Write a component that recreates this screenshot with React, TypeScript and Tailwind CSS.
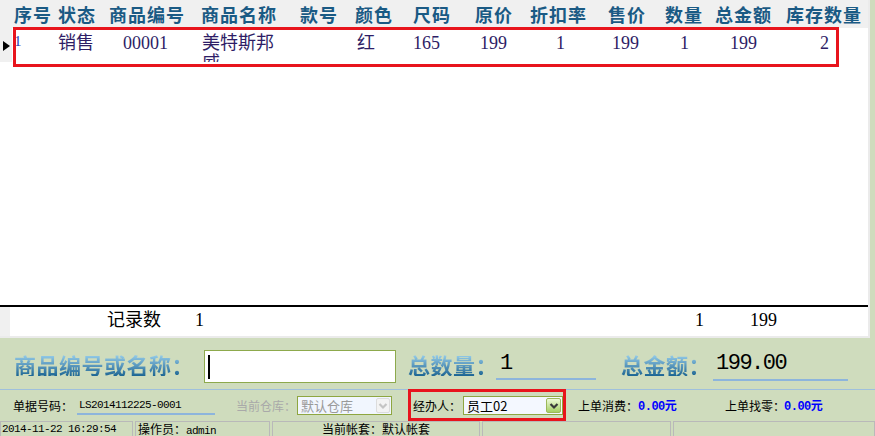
import React from 'react';

const columns = [
  { title: '序号', w: 'w-[44px]', pad: 'pl-[2px]', value: '1' },
  { title: '状态', w: 'w-[51px]', pad: 'pl-[2px]', value: '销售' },
  { title: '商品编号', w: 'w-[92px]', pad: 'pl-[16px]', value: '00001' },
  { title: '商品名称', w: 'w-[99px]', pad: 'pl-[3px]', value: '美特斯邦威' },
  { title: '款号', w: 'w-[55px]', pad: 'pl-[2px]', value: '' },
  { title: '颜色', w: 'w-[58px]', pad: 'pl-[4px]', value: '红' },
  { title: '尺码', w: 'w-[62px]', pad: 'pl-[2px]', value: '165' },
  { title: '原价', w: 'w-[55px]', pad: 'pl-[7px]', value: '199' },
  { title: '折扣率', w: 'w-[78px]', pad: 'pl-[28px]', value: '1' },
  { title: '售价', w: 'w-[57px]', pad: 'pl-[6px]', value: '199' },
  { title: '数量', w: 'w-[50px]', pad: 'pl-[17px]', value: '1' },
  { title: '总金额', w: 'w-[71px]', pad: 'pl-[17px]', value: '199' },
  { title: '库存数量', w: 'w-[82px]', pad: 'pl-[36px]', value: '2' },
];

const Chevron: React.FC<{ color: string }> = ({ color }) => (
  <svg width="10" height="8" viewBox="0 0 10 8">
    <path d="M1.5 2 L5 5.5 L8.5 2" fill="none" stroke={color} strokeWidth="2.2" />
  </svg>
);

const DropBox: React.FC<{ text: string; disabled?: boolean; width: string }> = ({ text, disabled, width }) => (
  <div className={`${width} h-[19px] border border-[#8ea640] flex items-center justify-between pl-[3px] pr-[1px] shrink-0 ${disabled ? 'bg-[#f1f6fe]' : 'bg-[#f4f8ff]'}`}>
    <span className={`text-[13px] leading-[15px] font-['Noto_Sans_CJK_SC',sans-serif] ${disabled ? 'text-[#9a9a9a]' : 'text-black'}`}>
      {text}
    </span>
    {disabled ? (
      <div className="w-[14px] h-[15px] rounded-[2px] border border-[#dcdcdc] bg-[#f3f3f3] flex items-center justify-center">
        <Chevron color="#c4c4c4" />
      </div>
    ) : (
      <div className="w-[15px] h-[15px] rounded-[2px] border border-[#9cb85a] bg-linear-to-b from-[#eefad8] to-[#a6cf62] flex items-center justify-center">
        <Chevron color="#3a3a3a" />
      </div>
    )}
  </div>
);

const BigLabel: React.FC<{ text: string; width: string; ml: string }> = ({ text, width, ml }) => (
  <span className={`${width} ${ml} mt-[14px] shrink-0 text-[22px] leading-[24px] font-bold tracking-[0.5px] font-['Noto_Sans_CJK_SC',sans-serif] bg-linear-to-b from-[#a6dcf6] to-[#1b6693] bg-clip-text text-transparent whitespace-nowrap`}>
    {text}
  </span>
);

export default function App() {
  return (
    <div className="w-[875px] h-[436px] bg-[#cfdcbd] flex flex-col overflow-hidden relative font-['Noto_Sans_CJK_SC',sans-serif]">
      {/* grid */}
      <div className="w-[870px] h-[338px] bg-white border-r-2 border-b-2 border-[#ebebeb] flex flex-col shrink-0">
        <div className="h-[28px] bg-[#f0f0f0] flex items-center shrink-0">
          <div className="w-[12px]" />
          {columns.map((c) => (
            <div key={c.title} className={`${c.w} pl-[2px] text-[18px] leading-[20px] font-bold tracking-[1px] text-[#1a5a84] whitespace-nowrap`}>
              {c.title}
            </div>
          ))}
        </div>
        <div className="h-[34px] flex shrink-0 overflow-hidden">
          <div className="w-[12px] bg-[#f0f0f0] flex items-start pt-[13px] pl-[3px]">
            <svg width="7" height="10" viewBox="0 0 7 10">
              <polygon points="0,0 7,5 0,10" fill="#000" />
            </svg>
          </div>
          {columns.map((c, i) => (
            <div key={c.title} className={`${c.w} ${c.pad} shrink-0`}>
              {i === 0 ? (
                <div className="pt-[5px] text-[15px] leading-[16px] text-[#2a3cb0] font-['Liberation_Serif',serif]">{c.value}</div>
              ) : (
                <div className={`pt-[5px] text-[18px] leading-[20px] text-[#2e1d66] font-['Liberation_Serif','Noto_Sans_CJK_SC',serif] ${i === 3 ? 'w-[76px]' : 'whitespace-nowrap'}`}>
                  {c.value}
                </div>
              )}
            </div>
          ))}
        </div>
        <div className="flex-1" />
        <div className="h-[31px] border-t-2 border-black flex shrink-0">
          <div className="w-[10px] bg-[#f0f0f0]" />
          <div className="flex items-start pt-[3px] text-[18px] leading-[20px] text-black font-['Liberation_Serif','Noto_Sans_CJK_SC',serif]">
            <span className="ml-[97px] w-[88px]">记录数</span>
            <span className="w-[500px]">1</span>
            <span className="w-[55px]">1</span>
            <span>199</span>
          </div>
        </div>
      </div>

      {/* totals */}
      <div className="h-[51px] flex items-start shrink-0">
        <BigLabel text="商品编号或名称：" width="w-[190px]" ml="ml-[14px]" />
        <div className="mt-[12px] w-[192px] h-[33px] shrink-0 border border-[#8da94c] bg-white pl-[3px] pt-[4px]">
          <div className="w-[2px] h-[24px] bg-black" />
        </div>
        <BigLabel text="总数量：" width="w-[88px]" ml="ml-[12px]" />
        <div className="mt-[14px] w-[100px] h-[28px] shrink-0 border-b-2 border-[#8db5dc] pl-[4px] text-[22px] leading-[24px] text-black font-['Liberation_Mono',monospace]">
          1
        </div>
        <BigLabel text="总金额：" width="w-[92px]" ml="ml-[25px]" />
        <div className="mt-[14px] w-[135px] h-[29px] shrink-0 border-b-2 border-[#8db5dc] pl-[3px] text-[22px] leading-[24px] tracking-[-1.5px] text-black font-['Liberation_Mono',monospace]">
          199.00
        </div>
      </div>

      {/* info row */}
      <div className="h-[32px] border-t border-[#9fc0dc] flex items-center shrink-0 text-[12px] leading-[14px] whitespace-nowrap relative">
        <span className="ml-[13px] w-[64px] shrink-0 text-black">单据号码：</span>
        <div className="w-[138px] h-[19px] shrink-0 border-b-2 border-[#8db5dc] pl-[2px] pt-[2px] text-[11px] leading-[14px] tracking-[-0.6px] text-black font-['Liberation_Mono',monospace]">
          LS2014112225-0001
        </div>
        <span className="ml-[21px] w-[61px] shrink-0 text-[#a9a9a9]">当前仓库：</span>
        <DropBox text="默认仓库" disabled width="w-[95px]" />
        <span className="ml-[21px] w-[50px] shrink-0 text-black">经办人：</span>
        <DropBox text="员工02" width="w-[100px]" />
        <span className="ml-[15px] w-[60px] shrink-0 text-black">上单消费：</span>
        <span className="w-[87px] shrink-0 font-bold text-[#0000ff]">
          <span className="font-['Liberation_Mono',monospace] text-[12px] tracking-[-0.5px]">0.00</span>元
        </span>
        <span className="w-[59px] shrink-0 text-black">上单找零：</span>
        <span className="shrink-0 font-bold text-[#0000ff]">
          <span className="font-['Liberation_Mono',monospace] text-[12px] tracking-[-0.5px]">0.00</span>元
        </span>
        <div className="absolute left-[408px] top-[-1px] w-[158px] h-[32px] border-[3px] border-[#e8141c]" />
      </div>

      {/* status bar */}
      <div className="h-[15px] flex gap-[2px] text-[12px] leading-[14px] text-black whitespace-nowrap">
        <div className="w-[133px] border-t border-x border-[#b9b9b9] pl-[1px] text-[11px] tracking-[-0.6px] font-['Liberation_Mono',monospace]">
          2014-11-22 16:29:54
        </div>
        <div className="w-[135px] border-t border-x border-[#b9b9b9] pl-[2px]">
          操作员：<span className="text-[11px] tracking-[-0.6px] font-['Liberation_Mono',monospace]">admin</span>
        </div>
        <div className="w-[208px] border-t border-x border-[#b9b9b9] text-center">当前帐套：默认帐套</div>
        <div className="w-[189px] border-t border-x border-[#b9b9b9]" />
        <div className="w-[202px] border-t border-x border-[#b9b9b9]" />
      </div>

      {/* annotation */}
      <div className="absolute left-[13px] top-[27px] w-[826px] h-[40px] border-[3px] border-[#e8141c]" />
    </div>
  );
}
